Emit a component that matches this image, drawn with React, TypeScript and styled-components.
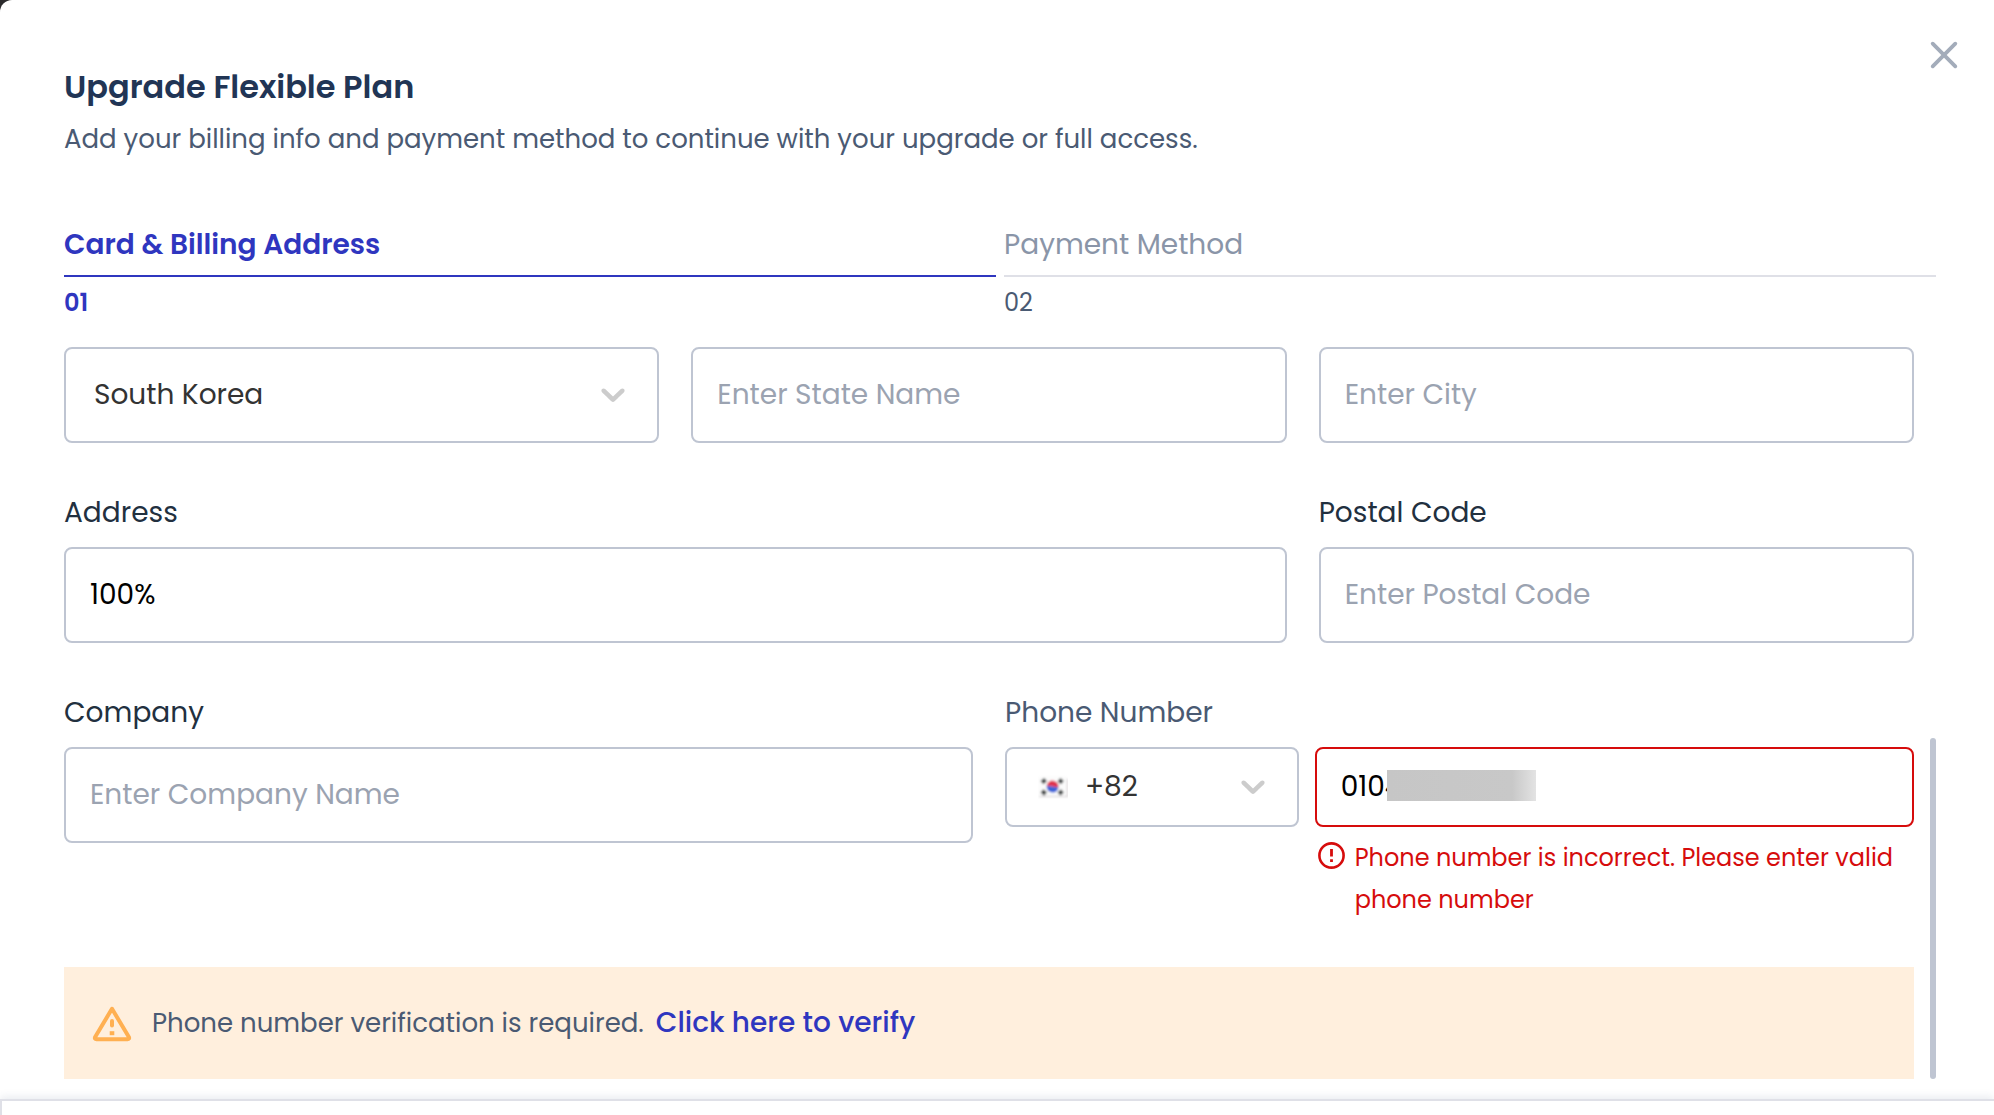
import React, { useState } from "react";
import styled, { createGlobalStyle } from "styled-components";

const color = {
  primary: "#2f36bf",
  heading: "#213555",
  body: "#4a5a73",
  label: "#22303f",
  muted: "#8a95a8",
  placeholder: "#9ba3b1",
  border: "#bfc5d2",
  rule: "#dfe0e7",
  error: "#d60c0c",
  warning: "#ffb052",
  warningBg: "#ffefdd",
};

const GlobalStyle = createGlobalStyle`
  *, *::before, *::after { box-sizing: border-box; }
  body {
    margin: 0;
    background: #2b2a2c;
    font-family: Poppins, Inter, "Open Sans", sans-serif;
  }
  button, input, select { font-family: inherit; }
`;

const Dialog = styled.main`
  position: relative;
  display: flex;
  flex-direction: column;
  min-height: 100vh;
  background: #fff;
  border-top-left-radius: 12px;
`;

const CloseButton = styled.button`
  position: absolute;
  top: 35px;
  right: 30px;
  display: grid;
  place-items: center;
  width: 40px;
  height: 40px;
  padding: 0;
  border: 0;
  background: none;
  cursor: pointer;
`;

const Header = styled.header`
  display: grid;
  gap: 8px;
  padding: 63px 120px 66px 64px;
`;

const Title = styled.h1`
  margin: 0;
  font-size: 32px;
  line-height: 48px;
  font-weight: 600;
  color: ${color.heading};
`;

const Subtitle = styled.p`
  margin: 0;
  font-size: 26px;
  line-height: 40px;
  color: ${color.body};
`;

const Steps = styled.nav`
  display: grid;
  grid-template-columns: 1fr 1fr;
  gap: 8px;
  margin: 0 58px 26px 64px;
`;

const StepButton = styled.button<{ $active?: boolean }>`
  display: grid;
  gap: 8px;
  padding: 0;
  border: 0;
  background: none;
  text-align: left;
  cursor: pointer;
  font-weight: ${(p) => (p.$active ? 600 : 400)};
  color: ${(p) => (p.$active ? color.primary : color.muted)};
`;

const StepName = styled.span<{ $active?: boolean }>`
  padding-bottom: 10px;
  border-bottom: 2px solid ${(p) => (p.$active ? color.primary : color.rule)};
  font-size: 28px;
  line-height: 40px;
`;

const StepNumber = styled.span<{ $active?: boolean }>`
  font-size: 24px;
  line-height: 36px;
  color: ${(p) => (p.$active ? color.primary : color.body)};
`;

const Body = styled.div`
  flex: 1;
  display: flex;
  gap: 16px;
  margin: 0 58px 20px 64px;
`;

const Form = styled.form`
  flex: 1;
  min-width: 0;
`;

const Rows = styled.div`
  display: grid;
  gap: 50px;
`;

const Row = styled.div<{ $columns: string }>`
  display: grid;
  grid-template-columns: ${(p) => p.$columns};
  gap: 32px;
  align-items: start;
`;

const Field = styled.div<{ $span?: number }>`
  grid-column: span ${(p) => p.$span ?? 1};
  display: grid;
  gap: 14px;
  min-width: 0;
`;

const Label = styled.label<{ $soft?: boolean }>`
  font-size: 28px;
  line-height: 40px;
  color: ${(p) => (p.$soft ? color.body : color.label)};
`;

const TextInput = styled.input<{ $compact?: boolean; $invalid?: boolean }>`
  display: block;
  width: 100%;
  height: ${(p) => (p.$compact ? 80 : 96)}px;
  padding: 0 24px;
  border: 2px solid ${(p) => (p.$invalid ? color.error : color.border)};
  border-radius: 8px;
  background: #fff;
  font-size: 28px;
  color: #000;
  outline: none;
  &::placeholder {
    color: ${color.placeholder};
    opacity: 1;
  }
`;

const Overlay = styled.div`
  position: relative;
  min-width: 0;
`;

const Select = styled.select<{ $compact?: boolean }>`
  display: block;
  width: 100%;
  height: ${(p) => (p.$compact ? 80 : 96)}px;
  padding: 0 66px 2px ${(p) => (p.$compact ? 78 : 28)}px;
  border: 2px solid ${color.border};
  border-radius: 8px;
  background: #fff;
  font-size: 28px;
  color: #333;
  appearance: none;
  outline: none;
`;

const ChevronSlot = styled.span`
  position: absolute;
  inset: 0 26px 2px auto;
  display: grid;
  align-items: center;
  pointer-events: none;
`;

const FlagSlot = styled.span`
  position: absolute;
  inset: 0 auto 0 33px;
  display: grid;
  align-items: center;
  pointer-events: none;
`;

const Redaction = styled.span`
  position: absolute;
  top: 23px;
  left: 72px;
  width: 149px;
  height: 31px;
  background: linear-gradient(90deg, #c6c6c6 0%, #c8c8c8 84%, #e3e3e3 100%);
`;

const PhoneControls = styled.div`
  display: grid;
  grid-template-columns: 49fr 100fr;
  gap: 0 16px;
`;

const ErrorMessage = styled.p`
  grid-column: 2;
  display: flex;
  gap: 10px;
  margin: 10px 0 0 3px;
  font-size: 24px;
  line-height: 42px;
  color: ${color.error};
  svg {
    flex: none;
    margin-top: 5px;
  }
`;

const Banner = styled.div`
  display: flex;
  align-items: center;
  min-height: 112px;
  margin-top: 46px;
  padding: 0 28px;
  background: ${color.warningBg};
  svg {
    flex: none;
    margin-right: 20px;
  }
`;

const BannerText = styled.span`
  font-size: 26px;
  line-height: 40px;
  color: ${color.body};
`;

const VerifyLink = styled.a`
  margin-left: 12px;
  font-size: 28px;
  line-height: 40px;
  font-weight: 500;
  color: ${color.primary};
  text-decoration: none;
`;

const ScrollTrack = styled.div`
  display: flex;
  flex-direction: column;
  justify-content: flex-end;
  width: 6px;
`;

const ScrollThumb = styled.div`
  height: 341px;
  border-radius: 3px;
  background: ${color.border};
`;

const Footer = styled.footer`
  min-height: 16px;
  border: solid ${color.rule};
  border-width: 2px 0 0 2px;
  box-shadow: 0 -2px 8px rgba(60, 80, 120, 0.12);
`;

const CloseIcon = () => (
  <svg width="28" height="28" viewBox="0 0 28 28" aria-hidden="true">
    <path d="M2.7 2.7 25.3 25.3M25.3 2.7 2.7 25.3" stroke="#a3acba" strokeWidth="3.8" strokeLinecap="round" />
  </svg>
);

const Chevron = () => (
  <ChevronSlot>
    <svg width="40" height="40" viewBox="0 0 20 20" fill="#ccc" aria-hidden="true">
      <path d="M4.516 7.548c0.436-0.446 1.043-0.481 1.576 0l3.908 3.747 3.908-3.747c0.533-0.481 1.141-0.446 1.574 0 0.436 0.445 0.408 1.197 0 1.615-0.406 0.418-4.695 4.502-4.695 4.502-0.217 0.223-0.502 0.335-0.787 0.335s-0.57-0.112-0.789-0.335c0 0-4.287-4.084-4.695-4.502s-0.436-1.17 0-1.615z" />
    </svg>
  </ChevronSlot>
);

const KoreaFlag = () => (
  <svg width="30" height="24" viewBox="0 0 30 24" aria-hidden="true">
    <defs>
      <filter id="flag-soft" x="-10%" y="-10%" width="120%" height="120%">
        <feGaussianBlur stdDeviation="0.9" />
      </filter>
    </defs>
    <g filter="url(#flag-soft)">
      <rect x="0.5" y="1.5" width="29" height="20" rx="1" fill="#fbfbfb" />
      <path d="M1 21.5h28.5V4" fill="none" stroke="#d2cccf" strokeWidth="1.2" />
      <path d="M8.6 11.6a6 6 0 0 1 12 0z" fill="#e0314e" transform="rotate(8 14.6 11.6)" />
      <path d="M8.6 11.6a6 6 0 0 0 12 0z" fill="#3d63d8" transform="rotate(8 14.6 11.6)" />
      <g stroke="#3f4444" strokeWidth="4.4">
        <path d="M4 7.6 7.6 4.6M21 4.6 24.4 7.6M4 15.8 7.6 19M21 19 24.4 15.8" />
      </g>
    </g>
  </svg>
);

const ErrorIcon = () => (
  <svg width="27" height="27" viewBox="0 0 27 27" fill="none" aria-hidden="true">
    <circle cx="13.5" cy="13.5" r="12.1" stroke={color.error} strokeWidth="2.6" />
    <path d="M13.5 7v7.6M13.5 17.2v2.8" stroke={color.error} strokeWidth="2.8" />
  </svg>
);

const WarningIcon = () => (
  <svg width="40" height="38" viewBox="0 -2 40 38" fill="none" aria-hidden="true">
    <path d="M20 2.8 37 31.2Q37.6 33.2 35.6 33.2H4.4Q2.4 33.2 3 31.2Z" stroke={color.warning} strokeWidth="4" strokeLinejoin="round" />
    <path d="M20 15v4.6" stroke={color.warning} strokeWidth="4" strokeLinecap="round" />
    <path d="M20 25.2v4" stroke={color.warning} strokeWidth="4.6" />
  </svg>
);

export default function App() {
  const [address, setAddress] = useState("100%");
  const [phone, setPhone] = useState("0104");

  return (
    <>
      <GlobalStyle />
      <Dialog>
        <CloseButton type="button" aria-label="Close">
          <CloseIcon />
        </CloseButton>
        <Header>
          <Title>Upgrade Flexible Plan</Title>
          <Subtitle>Add your billing info and payment method to continue with your upgrade or full access.</Subtitle>
        </Header>
        <Steps>
          <StepButton type="button" $active aria-current="step">
            <StepName $active>Card &amp; Billing Address</StepName>
            <StepNumber $active>01</StepNumber>
          </StepButton>
          <StepButton type="button">
            <StepName>Payment Method</StepName>
            <StepNumber>02</StepNumber>
          </StepButton>
        </Steps>
        <Body>
          <Form>
            <Rows>
              <Row $columns="repeat(3, minmax(0, 1fr))">
                <Overlay>
                  <Select aria-label="Country" defaultValue="KR">
                    <option value="KR">South Korea</option>
                  </Select>
                  <Chevron />
                </Overlay>
                <TextInput aria-label="State" placeholder="Enter State Name" />
                <TextInput aria-label="City" placeholder="Enter City" />
              </Row>
              <Row $columns="repeat(3, minmax(0, 1fr))">
                <Field $span={2}>
                  <Label htmlFor="address">Address</Label>
                  <TextInput id="address" value={address} onChange={(e) => setAddress(e.target.value)} />
                </Field>
                <Field>
                  <Label htmlFor="postal">Postal Code</Label>
                  <TextInput id="postal" placeholder="Enter Postal Code" />
                </Field>
              </Row>
              <Row $columns="repeat(2, minmax(0, 1fr))">
                <Field>
                  <Label htmlFor="company">Company</Label>
                  <TextInput id="company" placeholder="Enter Company Name" />
                </Field>
                <Field>
                  <Label htmlFor="phone" $soft>
                    Phone Number
                  </Label>
                  <PhoneControls>
                    <Overlay>
                      <Select $compact aria-label="Country code" defaultValue="82">
                        <option value="82">+82</option>
                      </Select>
                      <FlagSlot>
                        <KoreaFlag />
                      </FlagSlot>
                      <Chevron />
                    </Overlay>
                    <Overlay>
                      <TextInput
                        id="phone"
                        type="tel"
                        $compact
                        $invalid
                        aria-invalid="true"
                        aria-describedby="phone-error"
                        value={phone}
                        onChange={(e) => setPhone(e.target.value)}
                      />
                      <Redaction />
                    </Overlay>
                    <ErrorMessage id="phone-error">
                      <ErrorIcon />
                      <span>Phone number is incorrect. Please enter valid phone number</span>
                    </ErrorMessage>
                  </PhoneControls>
                </Field>
              </Row>
            </Rows>
            <Banner>
              <WarningIcon />
              <BannerText>Phone number verification is required.</BannerText>
              <VerifyLink href="#verify">Click here to verify</VerifyLink>
            </Banner>
          </Form>
          <ScrollTrack>
            <ScrollThumb />
          </ScrollTrack>
        </Body>
        <Footer />
      </Dialog>
    </>
  );
}
